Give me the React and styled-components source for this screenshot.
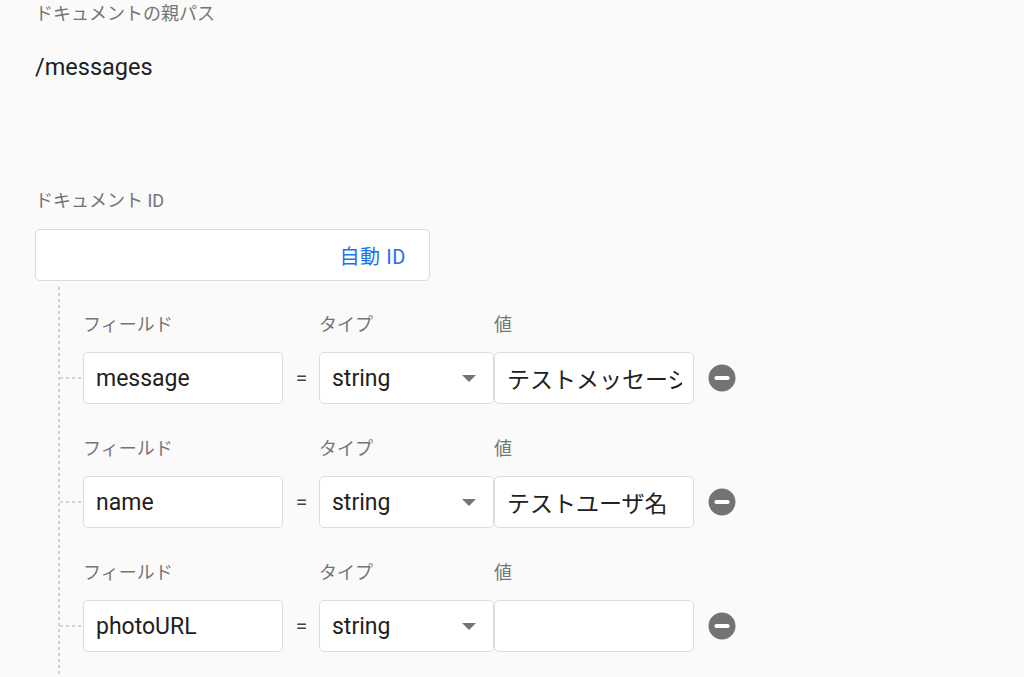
import React from "react";
import styled, { createGlobalStyle } from "styled-components";

const fields = [
    { name: "message", type: "string", value: "テストメッセージ" },
    { name: "name", type: "string", value: "テストユーザ名" },
    { name: "photoURL", type: "string", value: "" },
];

const GlobalStyle = createGlobalStyle`
    html, body {
        margin: 0;
        background: #fafafa;
    }
    body {
        font-family: Roboto, "Noto Sans CJK JP", sans-serif;
        color: #212121;
    }
`;

const RemoveIcon = () => (
    <svg width="28" height="28" viewBox="0 0 28 28">
        <circle cx="14" cy="14" r="13.5" fill="#737373" />
        <rect x="6.5" y="12" width="15" height="4" rx="1.8" fill="#fff" />
    </svg>
);

const App = () => {
    return <Page>
        <GlobalStyle />
        <Label>ドキュメントの親パス</Label>
        <ParentPath>/messages</ParentPath>
        <Label $top={104}>ドキュメント ID</Label>
        <DocIdBox>
            <AutoId>自動 ID</AutoId>
        </DocIdBox>
        <FieldList>
            {fields.map((field) => (
                <FieldRow key={field.name}>
                    <span />
                    <Label>フィールド</Label>
                    <span />
                    <Label>タイプ</Label>
                    <Label>値</Label>
                    <span />

                    <Connector />
                    <TextBox readOnly defaultValue={field.name} />
                    <Equals>=</Equals>
                    <TypeSelect>
                        {field.type}
                        <Caret />
                    </TypeSelect>
                    <TextBox readOnly defaultValue={field.value} />
                    <RemoveButton>
                        <RemoveIcon />
                    </RemoveButton>
                </FieldRow>
            ))}
        </FieldList>
    </Page>;
};

const Page = styled.div`
    padding-left: 35px;
    height: 677px;
    overflow: hidden;
    box-sizing: border-box;
`;

const Label = styled.div`
    font-size: 18px;
    line-height: 28px;
    color: #757575;
    margin-top: ${(p) => (p.$top ? `${p.$top}px` : "0")};
    white-space: nowrap;
`;

const ParentPath = styled.div`
    margin-top: 23px;
    font-size: 23.5px;
    line-height: 32px;
    color: #212121;
`;

const DocIdBox = styled.div`
    margin-top: 14px;
    width: 395px;
    height: 52px;
    box-sizing: border-box;
    background: #fff;
    border: 1px solid #dcdcdc;
    border-radius: 5px;
    display: flex;
    align-items: center;
    justify-content: flex-end;
    padding-right: 23px;
`;

const AutoId = styled.span`
    font-size: 20px;
    color: #1a73e8;
    letter-spacing: 0.6px;
`;

const FieldList = styled.div`
    margin-top: 6px;
    margin-left: 23px;
    padding-top: 24px;
    padding-bottom: 40px;
    background-image: linear-gradient(#d0d0d0 50%, transparent 50%);
    background-size: 2px 6px;
    background-repeat: repeat-y;
`;

const FieldRow = styled.div`
    display: grid;
    grid-template-columns: 25px 200px 36px 175px 200px auto;
    grid-template-rows: 28px 52px;
    row-gap: 13px;
    margin-bottom: 31px;
`;

const Connector = styled.div`
    align-self: center;
    margin-left: 2px;
    height: 2px;
    background-image: linear-gradient(90deg, #d6d6d6 50%, transparent 50%);
    background-size: 6px 2px;
`;

const TextBox = styled.input`
    width: 100%;
    height: 52px;
    box-sizing: border-box;
    margin: 0;
    padding: 0 11px 0 12px;
    background: #fff;
    border: 1px solid #dcdcdc;
    border-radius: 5px;
    font-family: Roboto, "Noto Sans CJK JP", sans-serif;
    font-size: 23px;
    color: #212121;
    outline: none;
`;

const Equals = styled.div`
    display: flex;
    align-items: center;
    justify-content: center;
    font-size: 21px;
    color: #444;
    padding-left: 1px;
`;

const TypeSelect = styled.div`
    height: 52px;
    box-sizing: border-box;
    display: flex;
    align-items: center;
    justify-content: space-between;
    padding: 0 17px 0 12px;
    background: #fff;
    border: 1px solid #dcdcdc;
    border-radius: 5px;
    font-size: 23px;
    color: #212121;
`;

const Caret = styled.span`
    width: 0;
    height: 0;
    border-left: 7px solid transparent;
    border-right: 7px solid transparent;
    border-top: 7px solid #757575;
`;

const RemoveButton = styled.div`
    display: flex;
    align-items: center;
    margin-left: 14px;
`;

export default App;
